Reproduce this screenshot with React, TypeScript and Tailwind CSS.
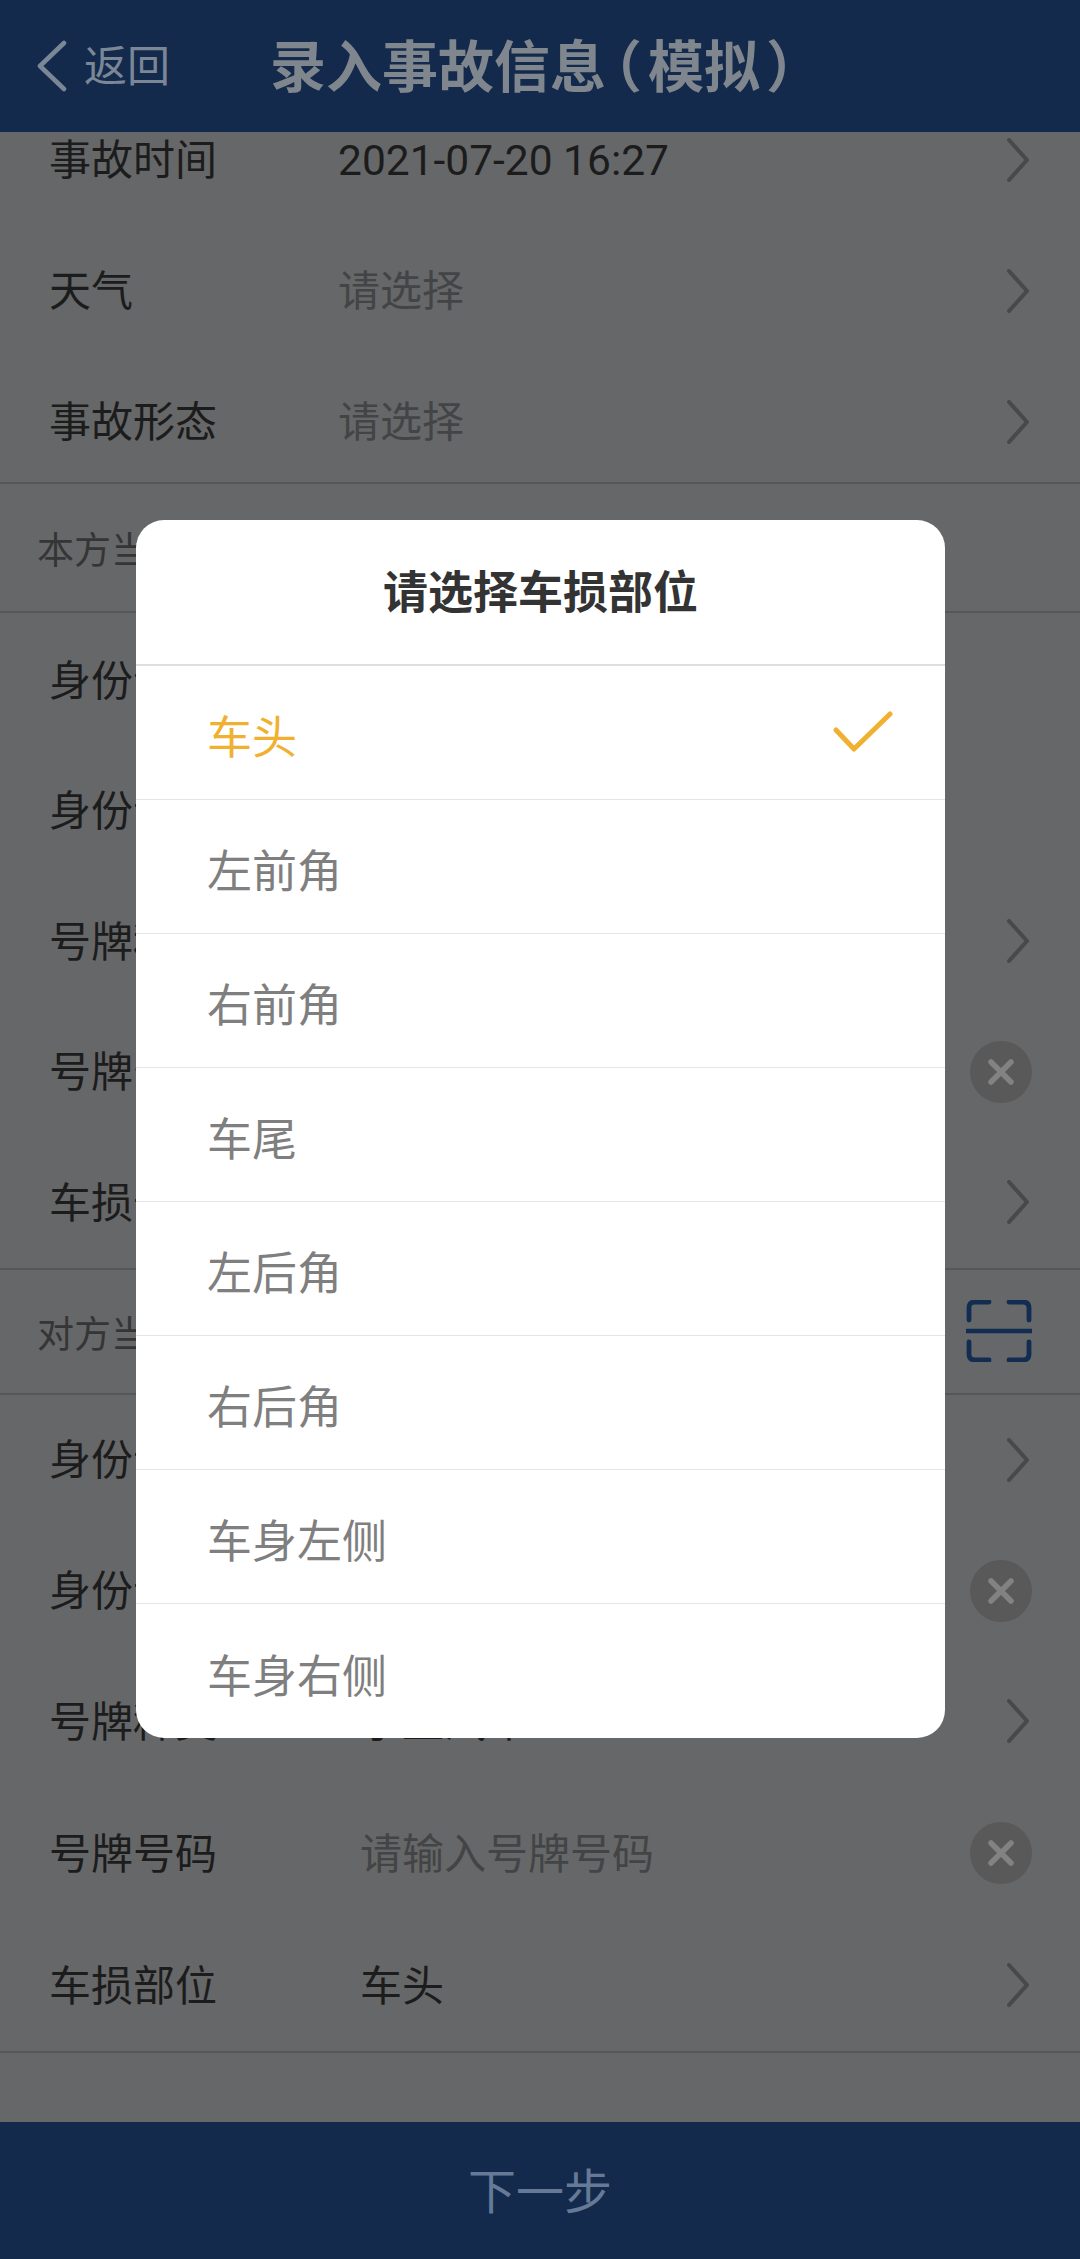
const FONT = "font-['Roboto','Noto_Sans_CJK_SC',sans-serif]";

function Chevron() {
  return (
    <svg width="24" height="44" viewBox="0 0 24 44" fill="none" className="shrink-0">
      <path d="M3 2 L21 22 L3 42" stroke="#48494b" strokeWidth="4" strokeLinecap="round" strokeLinejoin="round" />
    </svg>
  );
}

function ClearIcon() {
  return (
    <svg width="62" height="62" viewBox="0 0 62 62" className="-mr-[2px] shrink-0">
      <circle cx="31" cy="31" r="31" fill="#59595a" />
      <path d="M21 21 L41 41 M41 21 L21 41" stroke="#828282" strokeWidth="5.5" strokeLinecap="round" />
    </svg>
  );
}

function ScanIcon() {
  return (
    <svg width="66" height="62" viewBox="0 0 66 62" fill="none" className="-mr-[2px] shrink-0">
      <path
        d="M3 20 V8 Q3 2 9 2 H23 M43 2 H57 Q63 2 63 8 V20 M3 42 V54 Q3 60 9 60 H23 M43 60 H57 Q63 60 63 54 V42"
        stroke="#132c52"
        strokeWidth="4.8"
        strokeLinecap="round"
      />
      <path d="M1 31 H65" stroke="#132c52" strokeWidth="4.6" strokeLinecap="round" />
    </svg>
  );
}

type RowProps = {
  label: string;
  value?: string;
  placeholder?: boolean;
  icon?: "chevron" | "clear";
  valueWidth: string;
  height: string;
  date?: boolean;
};

function Row({ label, value, placeholder, icon, valueWidth, height, date }: RowProps) {
  return (
    <div className={`flex items-center pl-[49px] pr-[50px] ${height}`}>
      <span className={`shrink-0 pt-[3px] text-[42px] leading-none text-[#1c1c1c] ${valueWidth}`}>{label}</span>
      <span
        className={`flex-1 pt-[3px] leading-none ${date ? "text-[42.5px]" : "text-[42px]"} ${
          placeholder ? "text-[#434446]" : "text-[#1c1c1c]"
        }`}
      >
        {value}
      </span>
      {icon === "chevron" && <Chevron />}
      {icon === "clear" && <ClearIcon />}
    </div>
  );
}

function Section({ label, height, scan }: { label: string; height: string; scan?: boolean }) {
  return (
    <div className={`flex items-center justify-between border-y-2 border-[#565757] pl-[37px] pr-[50px] ${height}`}>
      <span className="pt-[8px] text-[37px] leading-none text-[#353535]">{label}</span>
      {scan && <ScanIcon />}
    </div>
  );
}

const OPTIONS = ["车头", "左前角", "右前角", "车尾", "左后角", "右后角", "车身左侧", "车身右侧"];

export default function App() {
  return (
    <div className={`relative flex h-[2259px] w-[1080px] flex-col overflow-hidden bg-[#666768] ${FONT}`}>
      <header className="relative z-10 flex h-[132px] shrink-0 items-center bg-[#132a4c] pl-[36px]">
        <svg width="32" height="52" viewBox="0 0 32 52" fill="none" className="shrink-0">
          <path d="M28 3 L4 26 L28 49" stroke="#7b8796" strokeWidth="4.6" strokeLinecap="round" strokeLinejoin="round" />
        </svg>
        <span className="ml-[16px] pt-[3px] text-[43px] leading-none text-[#7b8796]">返回</span>
        <span className="ml-[100px] flex pt-[3px] text-[56px] font-bold leading-none text-[#7f868d]">
          录入事故信息
          <span className="ml-[8px] mr-[6px] [font-feature-settings:'halt']">（</span>
          模拟
          <span className="ml-[6px] [font-feature-settings:'halt']">）</span>
        </span>
      </header>

      <main className="flex-1 overflow-hidden">
        <div className="-mt-[38px]">
          <div className="h-[388px]">
            <Row label="事故时间" value="2021-07-20 16:27" date icon="chevron" valueWidth="w-[289px]" height="h-[131px]" />
            <Row label="天气" value="请选择" placeholder icon="chevron" valueWidth="w-[289px]" height="h-[131px]" />
            <Row label="事故形态" value="请选择" placeholder icon="chevron" valueWidth="w-[289px]" height="h-[131px]" />
          </div>

          <Section label="本方当事人信息" height="h-[131px]" />

          <div className="pt-[2px]">
            <Row label="身份证件" value="居民身份证" valueWidth="w-[311px]" height="h-[130.5px]" />
            <Row label="身份证号" value="" valueWidth="w-[311px]" height="h-[130.5px]" />
            <Row label="号牌种类" value="小型汽车" icon="chevron" valueWidth="w-[311px]" height="h-[130.5px]" />
            <Row label="号牌号码" value="" icon="clear" valueWidth="w-[311px]" height="h-[130.5px]" />
            <Row label="车损部位" value="车头" icon="chevron" valueWidth="w-[311px]" height="h-[130.5px]" />
          </div>

          <Section label="对方当事人信息" height="h-[127px]" scan />

          <div>
            <Row label="身份证件" value="居民身份证" icon="chevron" valueWidth="w-[311px]" height="h-[130.8px]" />
            <Row label="身份证号" value="" icon="clear" valueWidth="w-[311px]" height="h-[130.8px]" />
            <Row label="号牌种类" value="小型汽车" icon="chevron" valueWidth="w-[311px]" height="h-[130.8px]" />
            <Row label="号牌号码" value="请输入号牌号码" placeholder icon="clear" valueWidth="w-[311px]" height="h-[133px]" />
            <Row label="车损部位" value="车头" icon="chevron" valueWidth="w-[311px]" height="h-[130.8px]" />
          </div>

          <div className="h-[80px] border-t-2 border-[#565757]" />
        </div>
      </main>

      <footer className="relative z-10 flex h-[137px] shrink-0 items-center justify-center bg-[#132a4c]">
        <span className="pt-[4px] text-[48px] leading-none text-[#667a97]">下一步</span>
      </footer>

      <div className="absolute left-[136px] top-[520px] z-20 h-[1218px] w-[809px] overflow-hidden rounded-[28px] bg-white">
        <div className="flex h-[146px] items-center justify-center border-b-2 border-[#dedede] pt-[3px]">
          <span className="text-[45px] font-bold leading-none text-[#333333]">请选择车损部位</span>
        </div>
        {OPTIONS.map((o, i) => (
          <div
            key={o}
            className={`flex h-[134px] items-center justify-between pl-[71px] pr-[52px] pt-[12px] ${
              i < OPTIONS.length - 1 ? "border-b border-[#e6e6e6]" : ""
            }`}
          >
            <span className={`text-[45px] leading-none ${i === 0 ? "text-[#efb12f]" : "text-[#7f7f7f]"}`}>{o}</span>
            {i === 0 && (
              <svg width="60" height="42" viewBox="0 0 60 42" fill="none" className="-mt-[14px] shrink-0">
                <path d="M3 19 L21 38 L57 3" stroke="#efb12f" strokeWidth="5" strokeLinecap="round" strokeLinejoin="round" />
              </svg>
            )}
          </div>
        ))}
      </div>
    </div>
  );
}
